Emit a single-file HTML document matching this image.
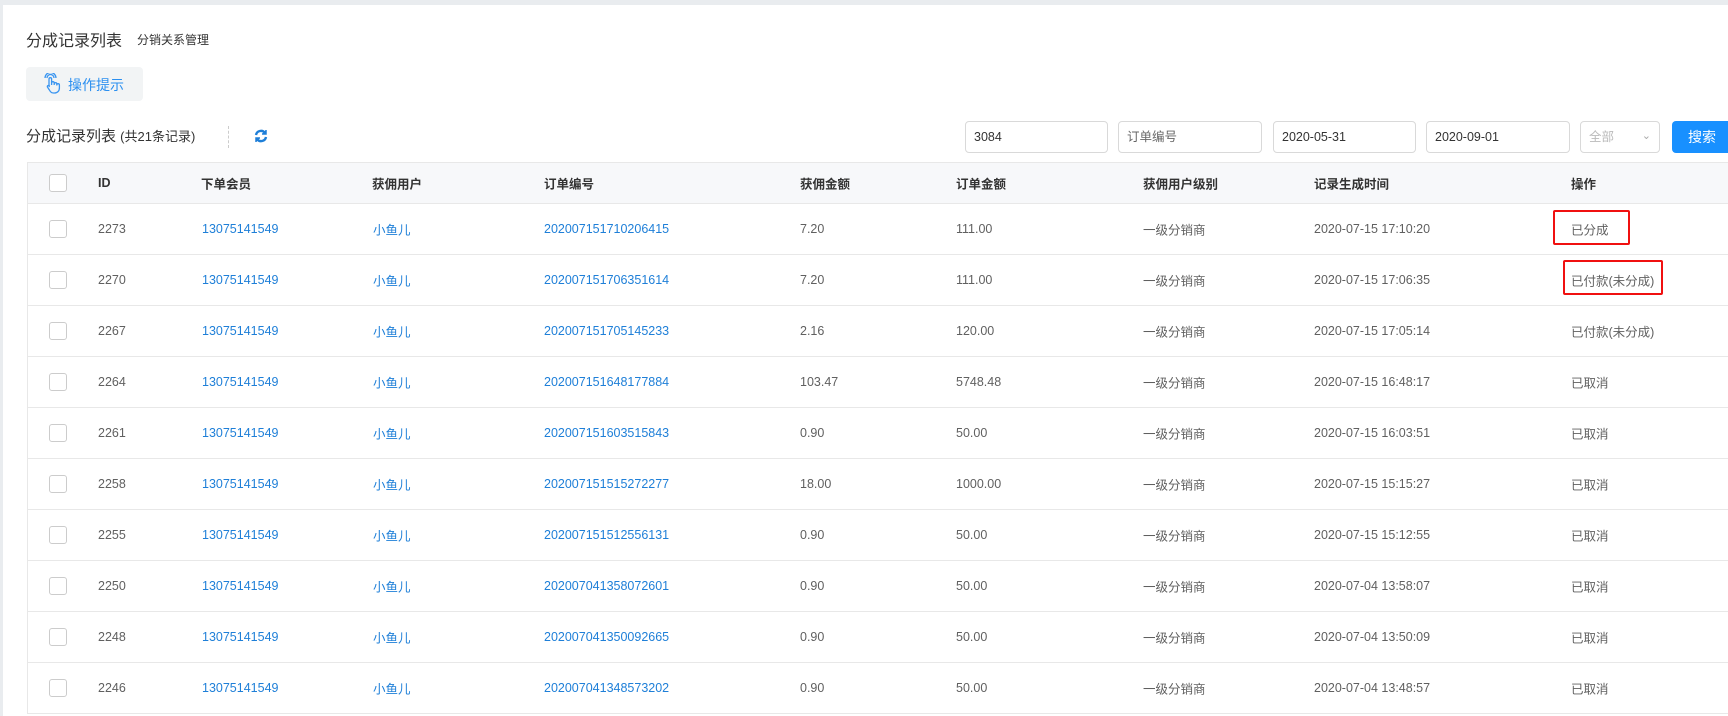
<!DOCTYPE html>
<html><head><meta charset="utf-8"><style>
*{margin:0;padding:0;box-sizing:border-box}
body{width:1728px;height:716px;overflow:hidden;background:#e9ecef;font-family:"Liberation Sans","Noto Sans CJK SC",sans-serif;color:#606060;font-size:12.5px;position:relative}
.page{position:absolute;left:3px;top:5px;right:0;bottom:0;background:#fff}
.a{position:absolute;white-space:nowrap}
.inp{position:absolute;top:121px;height:32px;border:1px solid #d9d9d9;border-radius:4px;background:#fff;padding-left:8px;line-height:30px;font-size:12.5px;color:#333}
.tbl{position:absolute;left:27px;top:162px;width:1710px;border-left:1px solid #e8e8e8;border-top:1px solid #e8e8e8}
.hd{height:41px;background:#f7f8fa;border-bottom:1px solid #e8e8e8;position:relative;font-weight:bold;color:#333}
.row{height:51px;border-bottom:1px solid #e8e8e8;position:relative}
.c{position:absolute;top:50%;transform:translateY(-50%);white-space:nowrap}
.cb{position:absolute;left:21px;top:50%;margin-top:-9px;width:18px;height:18px;border:1px solid #ccc;border-radius:3px;background:#fff}
.b{color:#1e7fd8}
.red{position:absolute;border:2px solid #f01010;border-radius:2px}
</style></head><body>
<div class="page"></div>
<div class="a" style="left:26px;top:27px;font-size:16px;color:#333">分成记录列表</div>
<div class="a" style="left:137px;top:31px;font-size:12px;color:#333">分销关系管理</div>
<div class="a" style="left:26px;top:67px;width:117px;height:34px;background:#f2f4f5;border-radius:4px"></div>
<svg class="a" style="left:42px;top:73px" width="20" height="22" viewBox="0 0 20 22" fill="none" stroke="#3a95f0" stroke-width="1.3"><path d="M7 13V6a1.3 1.3 0 0 1 2.6 0v6M9.6 10a1.3 1.3 0 0 1 2.6 0v2M12.2 11a1.3 1.3 0 0 1 2.6 0v1.5M14.8 12a1.3 1.3 0 0 1 2.6 0v3c0 3-2 5-5 5h-1c-2 0-3-1-4-3l-2-3a1.2 1.2 0 0 1 2-1.2L7 14"/><path d="M5 5a3.5 3.5 0 0 1 7 0M3 5a5.5 5.5 0 0 1 11 0"/></svg>
<div class="a" style="left:68px;top:75px;font-size:14px;color:#2b8ff0">操作提示</div>
<div class="a" style="left:26px;top:125px;font-size:15px;color:#333">分成记录列表 <span style="font-size:13px">(共21条记录)</span></div>
<div class="a" style="left:228px;top:126px;height:22px;border-left:1px dashed #ccc"></div>
<svg class="a" style="left:254px;top:129px" width="14" height="14" viewBox="0 0 14 14" fill="none" stroke="#1e7fd8" stroke-width="2.4"><path d="M2 6a5 5 0 0 1 9-2"/><path d="M12 8a5 5 0 0 1-9 2"/><path d="M12 1v4H8" fill="#1e7fd8" stroke-width="1.5"/><path d="M2 13V9h4" fill="#1e7fd8" stroke-width="1.5"/></svg>
<div class="inp" style="left:965px;width:143px">3084</div>
<div class="inp" style="left:1118px;width:144px;color:#666">订单编号</div>
<div class="inp" style="left:1273px;width:143px">2020-05-31</div>
<div class="inp" style="left:1426px;width:144px">2020-09-01</div>
<div class="inp" style="left:1580px;width:80px;color:#bbb">全部<span style="position:absolute;right:8px;top:-1px;color:#aaa;font-size:11px">&#8964;</span></div>
<div class="a" style="left:1672px;top:121px;width:70px;height:32px;background:#1890ff;border-radius:4px;color:#fff;font-size:14px;line-height:32px;padding-left:16px">搜索</div>
<div class="tbl">
<div class="hd"><div class="cb"></div><div class="c" style="left:70px">ID</div><div class="c" style="left:173px">下单会员</div><div class="c" style="left:344px">获佣用户</div><div class="c" style="left:516px">订单编号</div><div class="c" style="left:772px">获佣金额</div><div class="c" style="left:928px">订单金额</div><div class="c" style="left:1115px">获佣用户级别</div><div class="c" style="left:1286px">记录生成时间</div><div class="c" style="left:1543px">操作</div></div>
<div id="rows"></div>
</div>
<div class="red" style="left:1553px;top:210px;width:77px;height:35px"></div>
<div class="red" style="left:1563px;top:260px;width:100px;height:35px"></div>
<script>
var d=[["2273","202007151710206415","7.20","111.00","17:10:20","已分成"],["2270","202007151706351614","7.20","111.00","17:06:35","已付款(未分成)"],["2267","202007151705145233","2.16","120.00","17:05:14","已付款(未分成)"],["2264","202007151648177884","103.47","5748.48","16:48:17","已取消"],["2261","202007151603515843","0.90","50.00","16:03:51","已取消"],["2258","202007151515272277","18.00","1000.00","15:15:27","已取消"],["2255","202007151512556131","0.90","50.00","15:12:55","已取消"],["2250","202007041358072601","0.90","50.00","13:58:07","已取消"],["2248","202007041350092665","0.90","50.00","13:50:09","已取消"],["2246","202007041348573202","0.90","50.00","13:48:57","已取消"]];
var h="";d.forEach(function(r){var dt=r[1].substr(0,4)+"-"+r[1].substr(4,2)+"-"+r[1].substr(6,2);
h+='<div class="row"><div class="cb"></div><div class="c" style="left:70px">'+r[0]+'</div><div class="c b" style="left:174px">13075141549</div><div class="c b" style="left:345px">小鱼儿</div><div class="c b" style="left:516px">'+r[1]+'</div><div class="c" style="left:772px">'+r[2]+'</div><div class="c" style="left:928px">'+r[3]+'</div><div class="c" style="left:1115px">一级分销商</div><div class="c" style="left:1286px">'+dt+' '+r[4]+'</div><div class="c" style="left:1543px">'+r[5]+'</div></div>';});
document.getElementById("rows").innerHTML=h;
</script>
</body></html>
